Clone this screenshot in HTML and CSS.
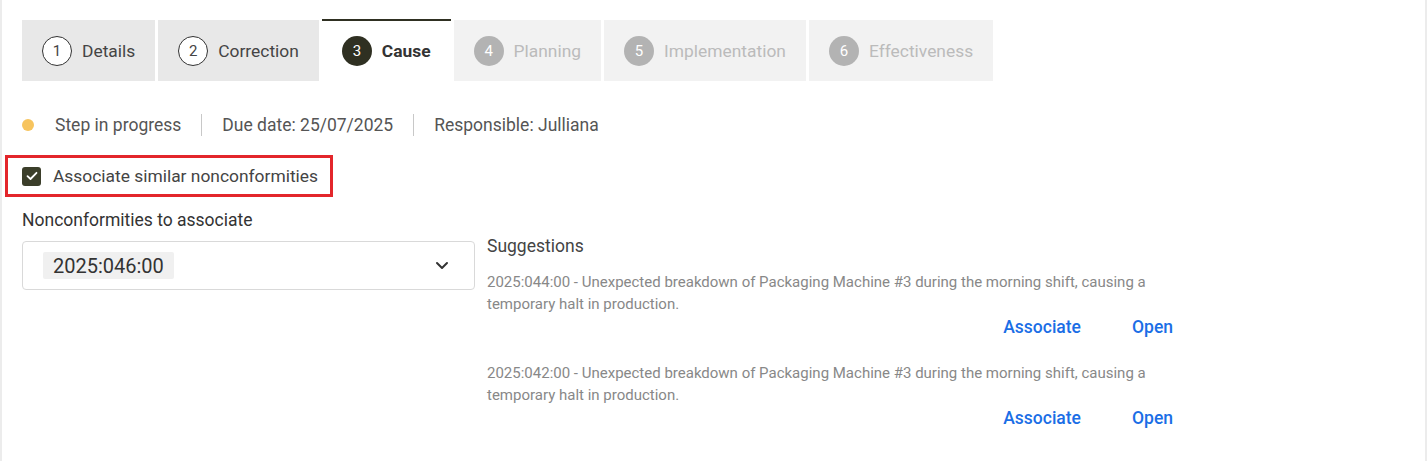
FILE: index.html
```html
<!DOCTYPE html>
<html>
<head>
<meta charset="utf-8">
<link rel="stylesheet" href="styles.css">
</head>
<body>
<div class="frame">
  <div class="tabs">
    <div class="tab done"><span class="num">1</span><span class="tab-label">Details</span></div>
    <div class="tab done"><span class="num">2</span><span class="tab-label">Correction</span></div>
    <div class="tab active"><span class="num">3</span><span class="tab-label">Cause</span></div>
    <div class="tab todo"><span class="num">4</span><span class="tab-label">Planning</span></div>
    <div class="tab todo"><span class="num">5</span><span class="tab-label">Implementation</span></div>
    <div class="tab todo"><span class="num">6</span><span class="tab-label">Effectiveness</span></div>
  </div>

  <div class="status">
    <span class="dot"></span>
    <span class="status-item first">Step in progress</span>
    <span class="sep"></span>
    <span class="status-item">Due date: 25/07/2025</span>
    <span class="sep"></span>
    <span class="status-item">Responsible: Julliana</span>
  </div>

  <div class="highlight">
    <span class="checkbox">
      <svg width="12" height="10" viewBox="0 0 12 10"><path d="M1.5 5.2 L4.5 8 L10.5 1.8" fill="none" stroke="#fff" stroke-width="1.8" stroke-linecap="round" stroke-linejoin="round"/></svg>
    </span>
    <span class="check-label">Associate similar nonconformities</span>
  </div>

  <div class="field-label">Nonconformities to associate</div>

  <div class="assoc-row">
    <div class="select">
      <span class="chip">2025:046:00</span>
      <svg class="chev" width="14" height="9" viewBox="0 0 14 9"><path d="M2 2 L7 7 L12 2" fill="none" stroke="#333" stroke-width="2" stroke-linecap="round" stroke-linejoin="round"/></svg>
    </div>
    <div class="suggestions">
      <div class="sugg-title">Suggestions</div>
      <div class="sugg-item">
        <p class="sugg-text">2025:044:00 - Unexpected breakdown of Packaging Machine #3 during the morning shift, causing a temporary halt in production.</p>
        <div class="sugg-actions"><a class="link">Associate</a><a class="link">Open</a></div>
      </div>
      <div class="sugg-item">
        <p class="sugg-text">2025:042:00 - Unexpected breakdown of Packaging Machine #3 during the morning shift, causing a temporary halt in production.</p>
        <div class="sugg-actions"><a class="link">Associate</a><a class="link">Open</a></div>
      </div>
    </div>
  </div>
</div>
</body>
</html>
```

FILE: styles.css
```css
* { box-sizing: border-box; }
html, body { margin: 0; padding: 0; background: #fff; }
body { font-family: Roboto, "Liberation Sans", sans-serif; color: #444; }

.frame {
  width: 1427px;
  height: 461px;
  border-left: 2px solid #ececec;
  border-right: 2px solid #ececec;
  padding-left: 20px;
  overflow: hidden;
}

.tabs {
  display: flex;
  align-items: flex-end;
  gap: 3px;
  padding-top: 19px;
}
.tab {
  display: flex;
  align-items: center;
  gap: 10px;
  height: 61px;
  padding: 0 20px;
  font-size: 17.4px;
}
.tab .num {
  width: 30px;
  height: 30px;
  border-radius: 50%;
  display: flex;
  align-items: center;
  justify-content: center;
  font-size: 15px;
  flex: none;
}
.tab.done { background: #e8e8e8; color: #444; }
.tab.done .num { background: #fff; border: 1.5px solid #333; color: #444; }
.tab.active {
  background: #fff;
  height: 62px;
  border-top: 2px solid #2f3022;
  color: #333;
  font-weight: 700;
}
.tab.active .num { background: #2f3022; color: #fff; font-weight: 400; }
.tab.todo { background: #f2f2f2; color: #bbb; }
.tab.todo .num { background: #b3b3b3; color: #fff; }

.status {
  display: flex;
  align-items: center;
  margin-top: 33px;
  height: 22px;
  font-size: 17.5px;
  color: #555;
}
.dot {
  width: 12px;
  height: 12px;
  border-radius: 50%;
  background: #f7c45e;
  margin-right: 21px;
}
.sep {
  width: 1px;
  height: 22px;
  background: #c8c8c8;
  margin: 0 20px;
}

.highlight {
  display: inline-flex;
  align-items: center;
  margin-top: 19px;
  margin-left: -17px;
  height: 42px;
  border: 3px solid #e3262b;
  padding: 0 12px 0 14px;
  gap: 12px;
}
.checkbox {
  width: 19px;
  height: 19px;
  border-radius: 3px;
  background: #3b3e2a;
  display: flex;
  align-items: center;
  justify-content: center;
}
.check-label { font-size: 17.4px; color: #444; }

.field-label {
  margin-top: 13px;
  font-size: 17.5px;
  line-height: 20px;
  color: #333;
}

.assoc-row {
  display: flex;
  align-items: flex-start;
  margin-top: 11px;
}
.select {
  width: 453px;
  height: 49px;
  border: 1px solid #d9d9d9;
  border-radius: 4px;
  display: flex;
  align-items: center;
  justify-content: space-between;
  padding: 0 25px 0 20px;
  flex: none;
}
.chip {
  background: #f0f0f0;
  border-radius: 2px;
  height: 27px;
  padding: 0 10px;
  display: flex;
  align-items: center;
  font-size: 20px;
  color: #333;
}
.chev { display: block; }

.suggestions {
  margin-left: 12px;
  margin-top: -5px;
  width: 686px;
}
.sugg-title {
  font-size: 17.5px;
  line-height: 20px;
  color: #444;
  margin-bottom: 15px;
}
.sugg-item + .sugg-item { margin-top: 24px; }
.sugg-text {
  margin: 0;
  font-size: 15px;
  line-height: 22px;
  color: #888;
  padding-right: 20px;
}
.sugg-actions {
  display: flex;
  justify-content: flex-end;
  gap: 51px;
  line-height: 22px;
  margin-top: 1px;
}
.link {
  font-size: 17.5px;
  font-weight: 500;
  color: #1a6ee6;
  cursor: pointer;
}
```
